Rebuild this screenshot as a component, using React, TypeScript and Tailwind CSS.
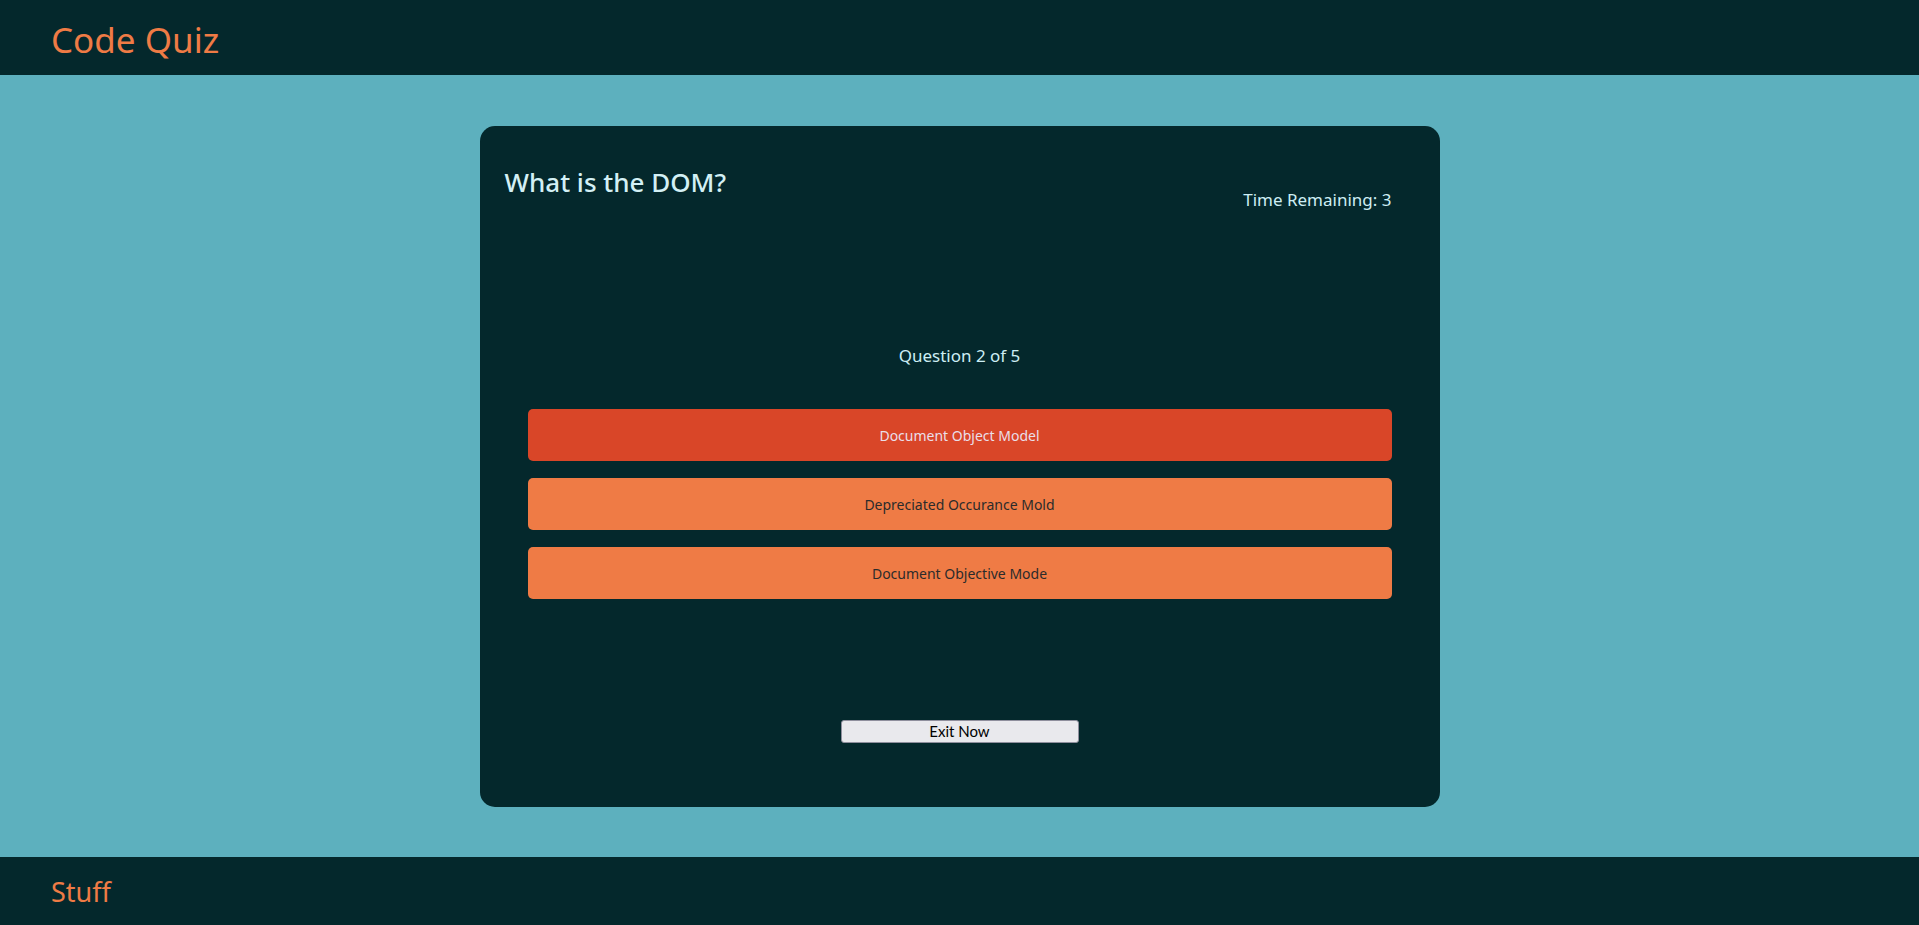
const ANSWERS = [
  { label: "Document Object Model", picked: true },
  { label: "Depreciated Occurance Mold", picked: false },
  { label: "Document Objective Mode", picked: false },
];

const Header = () => (
  <header className="h-[75px] bg-[#04282c] pl-[51px] pt-[16px]">
    <h1 className="text-[35px] leading-[48px] text-[#ef7b45]">Code Quiz</h1>
  </header>
);

const Footer = () => (
  <footer className="h-[68px] bg-[#04282c] pl-[51px] pt-[17px]">
    <p className="text-[27px] leading-[36px] text-[#ef7b45]">Stuff</p>
  </footer>
);

const QuizCard = () => (
  <div className="mx-auto flex h-[681px] w-[960px] flex-col rounded-[15px] bg-[#04282c] pt-[41px]">
    <div className="flex justify-between pl-[25px] pr-[48px]">
      <h2 className="text-[26px] font-medium leading-[30px] text-[#d3f0f5]">What is the DOM?</h2>
      <p className="mt-[21px] text-[17px] leading-[24px] text-[#cdeef4]">Time Remaining: 3</p>
    </div>

    <p className="mt-[132px] text-center text-[17px] leading-[24px] text-[#cdeef4]">Question 2 of 5</p>

    <div className="mt-[41px] flex flex-col gap-[17px] px-[48px]">
      {ANSWERS.map((a) => (
        <button
          key={a.label}
          className={`h-[52px] w-full rounded-[5px] text-[14px] ${
            a.picked ? "bg-[#d94628] text-[#eadfe8]" : "bg-[#ef7b45] text-[#2b2b2b]"
          }`}
        >
          {a.label}
        </button>
      ))}
    </div>

    <div className="mt-[121px] flex justify-center">
      <button className="h-[23px] w-[238px] rounded-[3px] border border-[#8f8f9d] bg-[#e9e9ed] font-['Lato',sans-serif] text-[15px] leading-none text-black">
        Exit Now
      </button>
    </div>
  </div>
);

export default function App() {
  return (
    <div className="flex min-h-screen flex-col bg-[#5db0be] font-['Noto_Sans',sans-serif]">
      <Header />
      <main className="flex-1 pt-[51px] pb-[50px]">
        <QuizCard />
      </main>
      <Footer />
    </div>
  );
}
